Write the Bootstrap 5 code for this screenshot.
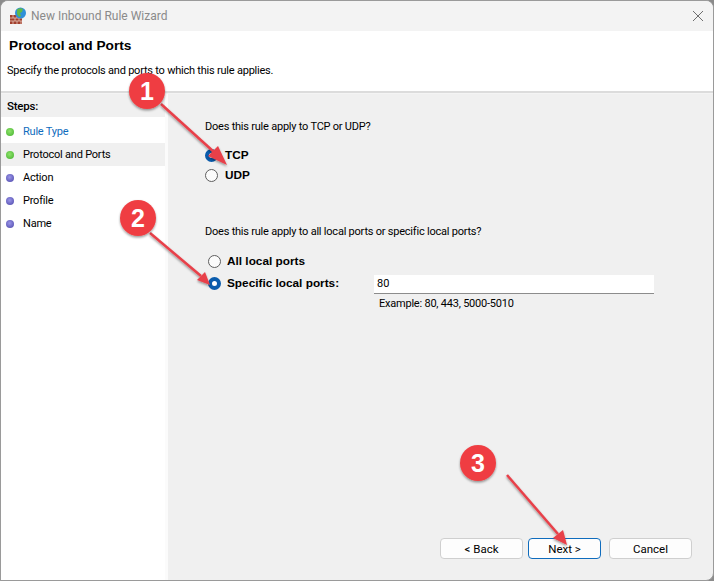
<!DOCTYPE html>
<html lang="en"><head><meta charset="utf-8"><title>New Inbound Rule Wizard</title>
<link rel="stylesheet" href="https://cdn.jsdelivr.net/npm/bootstrap@5.3.0/dist/css/bootstrap.min.css">
<style>
html,body{margin:0;height:581px;overflow:hidden;background:#8b8b8b}
body{font-family:Roboto,"Liberation Sans",sans-serif;font-size:11px;letter-spacing:-.22px;color:#000;line-height:16px}
.wiz{width:714px;height:581px;position:relative;background:#f0f0f0;border:1px solid #9a9a9a;border-bottom-right-radius:8px;border-top-right-radius:8px;border-top-left-radius:8px;overflow:hidden}
.tbar{height:30px;background:#f3f3f3;padding-left:8px;color:#8a8a8a;font-size:12px;letter-spacing:0}
.tbar svg.closex{margin-right:9px}
.hdr{height:60px;background:#fff;padding:6px 0 0 8px}
.hdr h1{font-weight:700;margin:0 0 9px;line-height:17px;font-family:"Liberation Sans",sans-serif;font-size:13.7px;letter-spacing:0}
.hdr div{margin-left:-2px}
.sep{height:3px;background:linear-gradient(#dcdcdc 0 2px,#f4f4f4 2px)}
.main{height:487px}
.side{width:164px;background:#fff;flex:none}
.stp-h{height:23px;background:#f0f0f0;padding:4px 0 0 6px;line-height:16px;font-weight:500;font-size:11.5px}
.stp{height:23px;padding-left:22px;line-height:23px;position:relative}
.stp-on{background:#f0f0f0}
.stp-first{color:#0f6cbd;margin-top:3px}
.dot{position:absolute;left:5px;top:8px;width:8px;height:8px;border-radius:50%;background:radial-gradient(circle at 45% 40%,#8fe36b,#42b02d)}
.dot-p{background:radial-gradient(circle at 45% 40%,#9a95e8,#4a45a8)}
.gut{width:3px;background:#fbfbfb;flex:none}
.pane{flex:1;padding:25px 0 0 37px;position:relative}
.q{margin:0}
.opt{display:flex;align-items:center;height:20px;font-weight:700;font-family:"Liberation Sans",sans-serif;font-size:11.8px;letter-spacing:0}
.rd{width:13px;height:13px;border-radius:50%;border:1.3px solid #5e5e5e;background:#fbfbfb;flex:none;margin-right:7px}
.rd-on{border:4px solid #0a5cad;background:#fff}
.g1{margin:10px 0 0 0}
.g2{margin:10px 0 0 3px}
.g2 .opt{height:22px}
.g2 .rd{margin-right:6px}
.ports{width:280px;height:19px;background:#fff;border:0;border-bottom:1px solid #8c8c8c;margin:2px 0 0 35px;padding:0 3px;font-size:11px;font-weight:400;font-family:Roboto,sans-serif}
.eg{margin:2px 0 0 174px}
.q2{margin-top:39px}
.btnbar{position:absolute;right:21px;bottom:22px;gap:5px}
.wbtn{height:21px;background:#fdfdfd;border:1px solid #cfcfcf;border-radius:4px;font-size:11.5px;line-height:18px;padding:0;color:#000;width:83px}
.wbtn-d{width:73px;border-color:#0f6cbd}
.wbtn-c{margin-left:3px}
.over{position:absolute;left:-1px;top:-1px;pointer-events:none}
.num{font-family:"Liberation Sans",sans-serif;font-weight:700;font-size:25px;fill:#fff;letter-spacing:0}
</style></head><body>
<div class="wiz">
 <div class="tbar d-flex align-items-center">
  <svg width="18" height="18" viewBox="0 0 18 18" class="icn"><rect x="1" y="8" width="12" height="9" fill="#a23f2d"/><path d="M1 11h12M1 14h12M4 8v3M8 8v3M12 8v3M6 11v3M10 11v3M4 14v3M8 14v3M12 14v3" stroke="#e3c4b6" stroke-width=".8"/><circle cx="11.5" cy="6" r="5.5" fill="#2f8fd8"/><path d="M8 2.5q3-2 6-.5l-1 3-2 1 1 3-2 1-2-3z" fill="#5fb84a"/></svg>
  <span class="flex-grow-1 ms-1">New Inbound Rule Wizard</span>
  <svg class="closex" width="12" height="12" viewBox="0 0 12 12"><path d="M1 1l10 10M11 1L1 11" stroke="#6e6e6e" fill="none"/></svg>
 </div>
 <div class="hdr"><h1>Protocol and Ports</h1><div>Specify the protocols and ports to which this rule applies.</div></div>
 <div class="sep"></div>
 <div class="main d-flex">
  <div class="side">
   <div class="stp-h">Steps:</div>
   <div class="stp stp-first"><i class="dot"></i>Rule Type</div>
   <div class="stp stp-on"><i class="dot"></i>Protocol and Ports</div>
   <div class="stp"><i class="dot dot-p"></i>Action</div>
   <div class="stp"><i class="dot dot-p"></i>Profile</div>
   <div class="stp"><i class="dot dot-p"></i>Name</div>
  </div>
  <div class="gut"></div>
  <div class="pane">
   <p class="q">Does this rule apply to TCP or UDP?</p>
   <div class="g1">
    <div class="opt"><span class="rd rd-on"></span>TCP</div>
    <div class="opt"><span class="rd"></span>UDP</div>
   </div>
   <p class="q q2">Does this rule apply to all local ports or specific local ports?</p>
   <div class="g2">
    <div class="opt"><span class="rd"></span>All local ports</div>
    <div class="opt"><span class="rd rd-on"></span>Specific local ports:<input class="ports" value="80" aria-label="ports"></div>
   </div>
   <div class="eg">Example: 80, 443, 5000-5010</div>
   <div class="btnbar d-flex">
    <button class="wbtn">&lt; Back</button><button class="wbtn wbtn-d">Next &gt;</button><button class="wbtn wbtn-c">Cancel</button>
   </div>
  </div>
 </div>
 <svg class="over" width="714" height="581" viewBox="0 0 714 581">
  <defs><filter id="sh" x="-30%" y="-30%" width="160%" height="160%"><feDropShadow dx="0" dy="1.5" stdDeviation="1.2" flood-color="#000" flood-opacity=".4"/></filter></defs>
  <g filter="url(#sh)" stroke="#e8404a" stroke-width="2.5" fill="#e8404a">
   <path d="M161 104L214 152" fill="none"/><path d="M227 165L208 156 218 146z" stroke="none"/>
   <path d="M150 233L201 276" fill="none"/><path d="M210 285L197 280 205 272z" stroke="none"/>
   <path d="M507 475L558 534" fill="none"/><path d="M567 545L553 538 563 530z" stroke="none"/>
  </g>
  <g filter="url(#sh)" fill="#ef3e42">
   <circle cx="147" cy="91" r="18"/><circle cx="138" cy="218" r="18"/><circle cx="478" cy="463" r="18"/>
  </g>
  <text class="num" x="147" y="100" text-anchor="middle">1</text>
  <text class="num" x="138" y="227" text-anchor="middle">2</text>
  <text class="num" x="478" y="472" text-anchor="middle">3</text>
 </svg>
</div>
</body></html>
